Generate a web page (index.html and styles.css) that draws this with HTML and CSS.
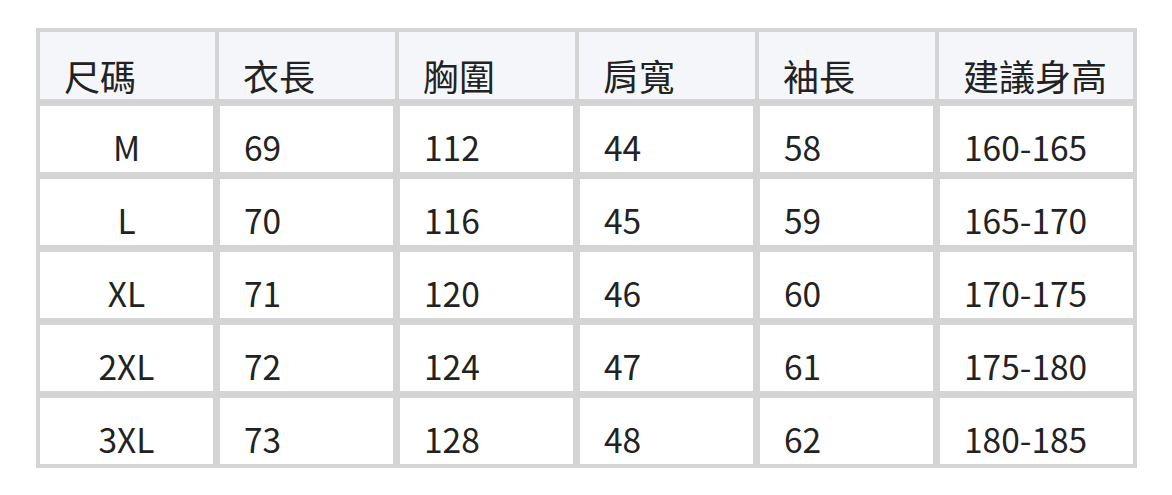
FILE: index.html
```html
<!DOCTYPE html>
<html lang="zh-Hant">
<head>
<meta charset="utf-8">
<title>尺碼表</title>
<link rel="stylesheet" href="styles.css">
</head>
<body>
<div class="size-table">
  <div class="head-row">
    <div class="hcell">尺碼</div>
    <div class="hcell">衣長</div>
    <div class="hcell">胸圍</div>
    <div class="hcell">肩寬</div>
    <div class="hcell">袖長</div>
    <div class="hcell">建議身高</div>
  </div>
  <div class="body-rows">
    <div class="cell size">M</div><div class="cell">69</div><div class="cell">112</div><div class="cell">44</div><div class="cell">58</div><div class="cell">160-165</div>
    <div class="cell size">L</div><div class="cell">70</div><div class="cell">116</div><div class="cell">45</div><div class="cell">59</div><div class="cell">165-170</div>
    <div class="cell size">XL</div><div class="cell">71</div><div class="cell">120</div><div class="cell">46</div><div class="cell">60</div><div class="cell">170-175</div>
    <div class="cell size">2XL</div><div class="cell">72</div><div class="cell">124</div><div class="cell">47</div><div class="cell">61</div><div class="cell">175-180</div>
    <div class="cell size">3XL</div><div class="cell">73</div><div class="cell">128</div><div class="cell">48</div><div class="cell">62</div><div class="cell">180-185</div>
  </div>
</div>
</body>
</html>
```
FILE: styles.css
```css
html, body {
  margin: 0;
  padding: 0;
  background: #ffffff;
}
body {
  padding: 28px 0 0 36px;
  font-family: "Noto Sans CJK TC", "Noto Sans", sans-serif;
  color: #222222;
}
.size-table {
  width: 1093px;
  padding: 4px;
  background: #d4d4d4;
  display: flex;
  flex-direction: column;
  gap: 7px;
}
.head-row {
  display: grid;
  grid-template-columns: 175px 176px 176px 176px 176px 1fr;
  gap: 4px;
}
.hcell {
  background: #f5f6fa;
  height: 67px;
  box-sizing: border-box;
  display: flex;
  align-items: flex-end;
  padding: 0 0 6px 24px;
  font-size: 36px;
  line-height: 1;
}
.body-rows {
  display: grid;
  grid-template-columns: repeat(5, 173px) 1fr;
  grid-auto-rows: 66px;
  gap: 7px;
}
.cell {
  background: #ffffff;
  box-sizing: border-box;
  display: flex;
  align-items: flex-end;
  padding: 0 0 9px 24px;
  font-size: 33.5px;
  line-height: 1;
}
.cell.size {
  justify-content: center;
  padding-left: 0;
}
```
